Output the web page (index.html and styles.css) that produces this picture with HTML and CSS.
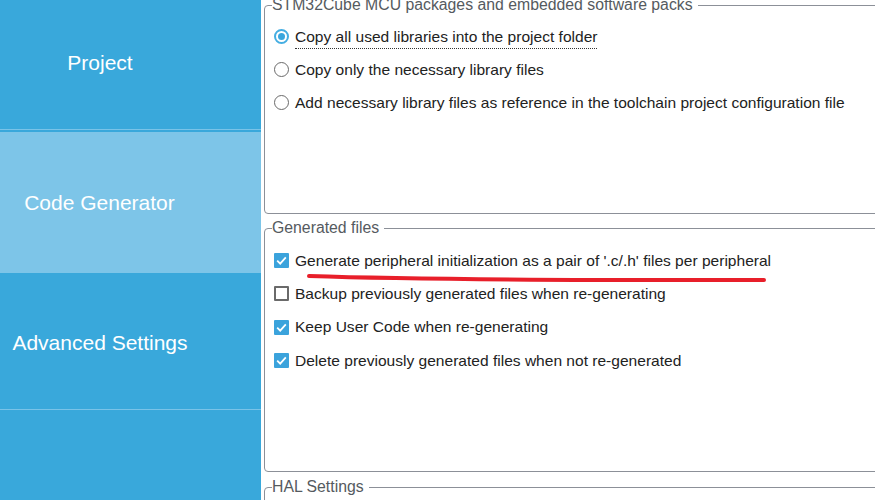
FILE: index.html
```html
<!DOCTYPE html>
<html>
<head>
<meta charset="utf-8">
<link rel="stylesheet" href="styles.css">
</head>
<body>
<div class="app">
  <nav class="sidebar">
    <div class="nav-item nav-project">Project</div>
    <div class="nav-item nav-active">Code Generator</div>
    <div class="nav-item nav-advanced">Advanced Settings</div>
    <div class="nav-item nav-rest"></div>
  </nav>
  <main class="main">
    <fieldset class="group group-packs">
      <legend>STM32Cube MCU packages and embedded software packs</legend>
      <div class="row"><span class="radio radio-on"></span><span class="label label-focus">Copy all used libraries into the project folder</span></div>
      <div class="row"><span class="radio"></span><span class="label">Copy only the necessary library files</span></div>
      <div class="row"><span class="radio"></span><span class="label">Add necessary library files as reference in the toolchain project configuration file</span></div>
    </fieldset>
    <fieldset class="group group-files">
      <legend>Generated files</legend>
      <div class="row row-tall"><span class="check check-on"><svg viewBox="0 0 15 15" width="15" height="15"><path d="M3.2 7.6 L6.2 10.6 L11.8 4.4" fill="none" stroke="#fff" stroke-width="1.8"/></svg></span><span class="label">Generate peripheral initialization as a pair of '.c/.h' files per peripheral</span>
        <svg class="annot" viewBox="0 0 470 16" width="470" height="16"><path d="M5 6 Q 140 10.5 460 10" fill="none" stroke="#e81f2a" stroke-width="4" stroke-linecap="round"/></svg>
      </div>
      <div class="row row-tall"><span class="check"></span><span class="label">Backup previously generated files when re-generating</span></div>
      <div class="row row-tall"><span class="check check-on"><svg viewBox="0 0 15 15" width="15" height="15"><path d="M3.2 7.6 L6.2 10.6 L11.8 4.4" fill="none" stroke="#fff" stroke-width="1.8"/></svg></span><span class="label">Keep User Code when re-generating</span></div>
      <div class="row row-tall"><span class="check check-on"><svg viewBox="0 0 15 15" width="15" height="15"><path d="M3.2 7.6 L6.2 10.6 L11.8 4.4" fill="none" stroke="#fff" stroke-width="1.8"/></svg></span><span class="label">Delete previously generated files when not re-generated</span></div>
    </fieldset>
    <fieldset class="group group-hal">
      <legend>HAL Settings</legend>
      <div class="row"></div>
    </fieldset>
  </main>
</div>
</body>
</html>
```

FILE: styles.css
```css
html, body {
  margin: 0;
  padding: 0;
  background: #fff;
  overflow: hidden;
}
body {
  width: 875px;
  height: 500px;
  font-family: "Liberation Sans", Arial, sans-serif;
}
.app {
  display: flex;
  height: 500px;
  overflow: hidden;
}
.sidebar {
  width: 261px;
  flex: 0 0 261px;
  background: #39a8db;
  display: flex;
  flex-direction: column;
}
.nav-item {
  display: flex;
  align-items: center;
  justify-content: center;
  padding-right: 61px;
  color: #fff;
  font-size: 21px;
  box-sizing: border-box;
}
.nav-project {
  height: 130px;
  padding-bottom: 4px;
  border-bottom: 1px solid #79c3e8;
  margin-bottom: 2px;
}
.nav-active {
  height: 141px;
  padding-right: 62px;
  background: #7dc5e8;
}
.nav-advanced {
  height: 137px;
  padding-top: 4px;
  border-bottom: 1px solid #79c3e8;
}
.nav-rest {
  flex: 1;
}
.main {
  flex: 1;
  padding-left: 3px;
  margin-right: -30px;
  display: flex;
  flex-direction: column;
}
.group {
  margin: 0;
  padding: 0 0 0 9px;
  border: 1px solid #8c9098;
  border-radius: 4px;
  min-width: 0;
}
.group legend {
  margin-left: -2px;
  padding: 0 5px 0 0;
  font-size: 15.8px;
  line-height: 18px;
  color: #555a60;
}
.group-packs {
  margin-top: -4px;
  padding-top: 6px;
  padding-bottom: 94px;
}
.group-files {
  margin-top: 5px;
  padding-top: 7px;
  padding-bottom: 94px;
}
.group-hal {
  margin-top: 6px;
  padding-top: 6px;
}
.row {
  height: 33px;
  display: flex;
  align-items: center;
  gap: 6px;
  position: relative;
}
.row-tall {
  height: 33.3px;
}
.label {
  font-size: 15.55px;
  line-height: 18px;
  color: #222;
  white-space: nowrap;
}
.label-focus {
  padding-bottom: 2px;
  margin-top: 3px;
  border-bottom: 1px dotted #333;
}
.radio {
  width: 15px;
  height: 15px;
  box-sizing: border-box;
  border: 1.5px solid #6a6a6a;
  border-radius: 50%;
  background: #fff;
  flex: 0 0 15px;
  display: flex;
  align-items: center;
  justify-content: center;
}
.radio-on {
  border: 2px solid #45aee2;
}
.radio-on::after {
  content: "";
  width: 7px;
  height: 7px;
  border-radius: 50%;
  background: #3aa6dd;
}
.check {
  width: 15px;
  height: 15px;
  box-sizing: border-box;
  border: 2px solid #6a6a6a;
  border-radius: 1px;
  background: #fff;
  flex: 0 0 15px;
  display: flex;
}
.check-on {
  border: none;
  background: #3ba3dc;
}
.annot {
  position: absolute;
  left: 30px;
  top: 26px;
}
```
